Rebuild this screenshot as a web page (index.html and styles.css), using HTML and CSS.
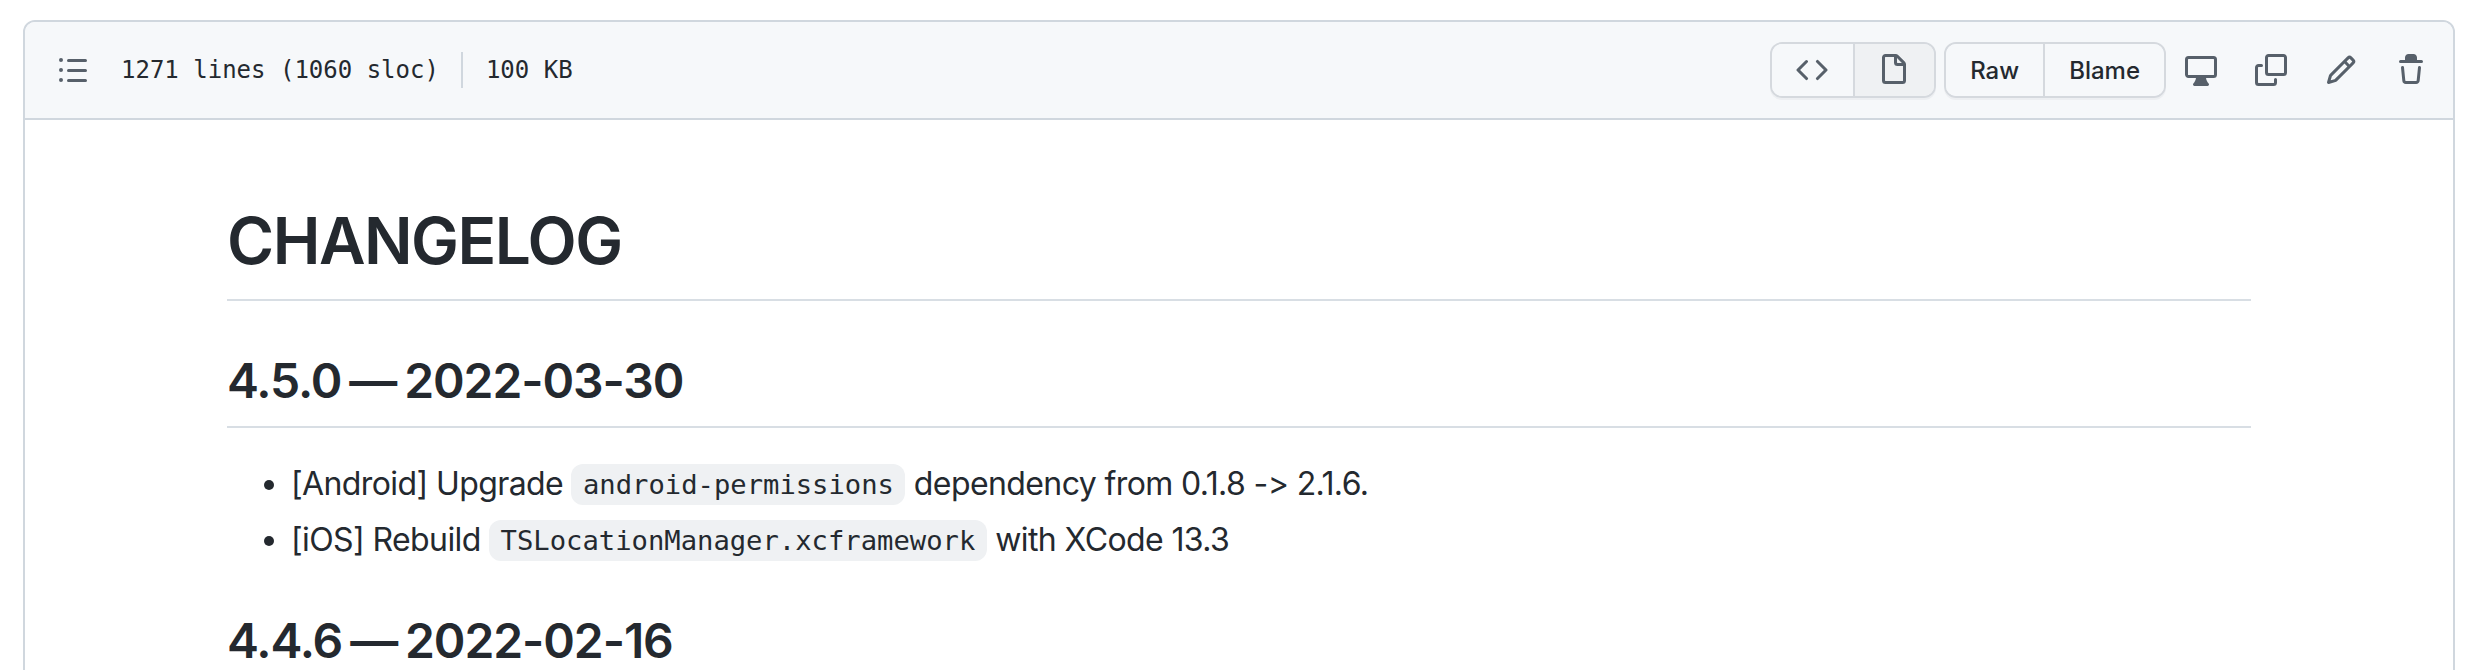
FILE: index.html
```html
<!DOCTYPE html>
<html lang="en">
<head>
<meta charset="utf-8">
<title>CHANGELOG</title>
<link rel="stylesheet" href="styles.css">
</head>
<body>
<div class="box">
  <header class="box-header">
    <div class="info">
      <svg class="icon" viewBox="0 0 16 16"><path d="M2 4a1 1 0 100-2 1 1 0 000 2zm3.75-1.5a.75.75 0 000 1.5h8.5a.75.75 0 000-1.5h-8.5zm0 5a.75.75 0 000 1.5h8.5a.75.75 0 000-1.5h-8.5zm0 5a.75.75 0 000 1.5h8.5a.75.75 0 000-1.5h-8.5zM3 8a1 1 0 11-2 0 1 1 0 012 0zm-1 6a1 1 0 100-2 1 1 0 000 2z"/></svg>
      <span class="meta lines">1271 lines (1060 sloc)</span>
      <span class="meta size">100 KB</span>
    </div>
    <div class="actions">
      <div class="btn-group view">
        <span class="btn icon-btn"><svg class="icon" viewBox="0 0 16 16"><path d="M4.72 3.22a.75.75 0 011.06 1.06L2.06 8l3.72 3.72a.75.75 0 11-1.06 1.06L.47 8.53a.75.75 0 010-1.06l4.25-4.25zm6.56 0a.75.75 0 10-1.06 1.06L13.94 8l-3.72 3.72a.75.75 0 101.06 1.06l4.25-4.25a.75.75 0 000-1.06l-4.25-4.25z"/></svg></span>
        <span class="btn icon-btn active"><svg class="icon" viewBox="0 0 16 16"><path d="M3.75 1.5a.25.25 0 00-.25.25v11.5c0 .138.112.25.25.25h8.5a.25.25 0 00.25-.25V6H9.75A1.75 1.75 0 018 4.25V1.5H3.75zm5.75.56v2.19c0 .138.112.25.25.25h2.19L9.5 2.06zM2 1.75C2 .784 2.784 0 3.75 0h5.086c.464 0 .909.184 1.237.513l3.414 3.414c.329.328.513.773.513 1.237v8.086A1.75 1.75 0 0112.25 15h-8.5A1.75 1.75 0 012 13.25V1.75z"/></svg></span>
      </div>
      <div class="btn-group text">
        <span class="btn">Raw</span>
        <span class="btn">Blame</span>
      </div>
      <div class="tools">
        <svg class="icon" viewBox="0 0 16 16"><path d="M1.75 2.5h12.5a.25.25 0 01.25.25v7.5a.25.25 0 01-.25.25H1.75a.25.25 0 01-.25-.25v-7.5a.25.25 0 01.25-.25zM14.25 1H1.75A1.75 1.75 0 000 2.75v7.5C0 11.216.784 12 1.75 12h3.727c-.1 1.041-.52 1.872-1.292 2.757A.75.75 0 004.75 16h6.5a.75.75 0 00.565-1.243c-.772-.885-1.193-1.716-1.292-2.757h3.727A1.75 1.75 0 0016 10.25v-7.5A1.75 1.75 0 0014.25 1zM9.018 12H6.982a5.72 5.72 0 01-.765 2.5h3.566a5.72 5.72 0 01-.765-2.5z"/></svg>
        <svg class="icon" viewBox="0 0 16 16"><path d="M0 6.75C0 5.784.784 5 1.75 5h1.5a.75.75 0 010 1.5h-1.5a.25.25 0 00-.25.25v7.5c0 .138.112.25.25.25h7.5a.25.25 0 00.25-.25v-1.5a.75.75 0 011.5 0v1.5A1.75 1.75 0 019.25 16h-7.5A1.75 1.75 0 010 14.25v-7.5z"/><path d="M5 1.75C5 .784 5.784 0 6.75 0h7.5C15.216 0 16 .784 16 1.75v7.5A1.75 1.75 0 0114.25 11h-7.5A1.75 1.75 0 015 9.25v-7.5zm1.75-.25a.25.25 0 00-.25.25v7.5c0 .138.112.25.25.25h7.5a.25.25 0 00.25-.25v-7.5a.25.25 0 00-.25-.25h-7.5z"/></svg>
        <svg class="icon" viewBox="0 0 16 16"><path d="M11.013 1.427a1.75 1.75 0 012.474 0l1.086 1.086a1.75 1.75 0 010 2.474l-8.61 8.61c-.21.21-.47.364-.756.445l-3.251.93a.75.75 0 01-.927-.928l.929-3.25a1.75 1.75 0 01.445-.758l8.61-8.61zm1.414 1.06a.25.25 0 00-.354 0L10.811 3.75l1.439 1.44 1.263-1.263a.25.25 0 000-.354l-1.086-1.086zM11.189 6.25L9.75 4.81l-6.286 6.287a.25.25 0 00-.064.108l-.558 1.953 1.953-.558a.249.249 0 00.108-.064l6.286-6.286z"/></svg>
        <svg class="icon" viewBox="0 0 16 16"><path d="M6.5 1.75a.25.25 0 01.25-.25h2.5a.25.25 0 01.25.25V3h-3V1.75zm4.5 0V3h2.25a.75.75 0 010 1.5H2.75a.75.75 0 010-1.5H5V1.75C5 .784 5.784 0 6.75 0h2.5C10.216 0 11 .784 11 1.75zM4.496 6.675a.75.75 0 10-1.492.15l.66 6.6A1.75 1.75 0 005.405 15h5.19c.9 0 1.652-.681 1.741-1.576l.66-6.6a.75.75 0 00-1.492-.149l-.66 6.6a.25.25 0 01-.249.225h-5.19a.25.25 0 01-.249-.225l-.66-6.6z"/></svg>
      </div>
    </div>
  </header>
  <article class="markdown">
    <h1>CHANGELOG</h1>
    <h2>4.5.0 — 2022-03-30</h2>
    <ul>
      <li>[Android] Upgrade <code>android-permissions</code> dependency from 0.1.8 -&gt; 2.1.6.</li>
      <li>[iOS] Rebuild <code>TSLocationManager.xcframework</code> with XCode 13.3</li>
    </ul>
    <h2>4.4.6 — 2022-02-16</h2>
  </article>
</div>
</body>
</html>
```
FILE: styles.css
```css
* { box-sizing: border-box; }
html, body { height: 670px; overflow: hidden; }
body {
  margin: 0;
  padding: 20px 19px 0 23px;
  background: #fff;
  color: #24292f;
  font-family: Inter, "Liberation Sans", sans-serif;
  font-variant-ligatures: none;
  font-feature-settings: "calt" 0;
}
.box {
  height: 720px;
  border: 2px solid #d0d7de;
  border-radius: 12px;
}
.box-header {
  height: 98px;
  padding: 0 26px 0 32px;
  display: flex;
  align-items: center;
  justify-content: space-between;
  background: #f6f8fa;
  border-bottom: 2px solid #d0d7de;
  border-radius: 10px 10px 0 0;
}
.icon { width: 32px; height: 32px; fill: #57606a; display: block; flex: none; }
.info { display: flex; align-items: center; }
.meta {
  font-family: "DejaVu Sans Mono", "Liberation Mono", monospace;
  font-size: 24px;
  line-height: 36px;
}
.lines {
  margin-left: 32px;
  padding-right: 22px;
  border-right: 2px solid #d0d7de;
}
.size { margin-left: 23px; }
.actions { display: flex; align-items: center; }
.btn-group {
  display: flex;
  height: 56px;
  border: 2px solid #d5d9de;
  border-radius: 12px;
  overflow: hidden;
  box-shadow: 0 2px 0 rgba(31, 35, 40, .04);
}
.btn {
  display: flex;
  align-items: center;
  justify-content: center;
  font-size: 24px;
  font-weight: 500;
  padding: 0 24px;
  background: #f6f8fa;
}
.btn + .btn { border-left: 2px solid #d5d9de; }
.view { margin-right: 8px; }
.icon-btn { width: 81px; padding: 0 2px 0 0; }
.icon-btn.active { background: #eff1f3; }
.tools { display: flex; align-items: center; gap: 38px; margin-left: 19px; }
.markdown { padding: 81px 202px 0 202px; }
h1, h2 {
  margin: 0;
  font-weight: 600;
  line-height: 1.25;
  border-bottom: 2px solid #d8dee4;
}
h1 { font-size: 64px; padding-bottom: 18px; margin-bottom: 50px; letter-spacing: -1.5px; }
h2 { font-size: 48px; padding-bottom: 15px; margin-bottom: 32px; letter-spacing: -1.1px; word-spacing: -3px; }
ul { margin: 0 0 46px; padding: 0 0 0 64px; font-size: 32px; line-height: 48px; letter-spacing: -.6px; }
li + li { margin-top: 7px; }
code {
  font-family: "DejaVu Sans Mono", "Liberation Mono", monospace;
  font-size: 27.2px;
  letter-spacing: 0;
  padding: 5px 11.5px;
  vertical-align: 1px;
  background: #eff1f3;
  border-radius: 12px;
}
```
